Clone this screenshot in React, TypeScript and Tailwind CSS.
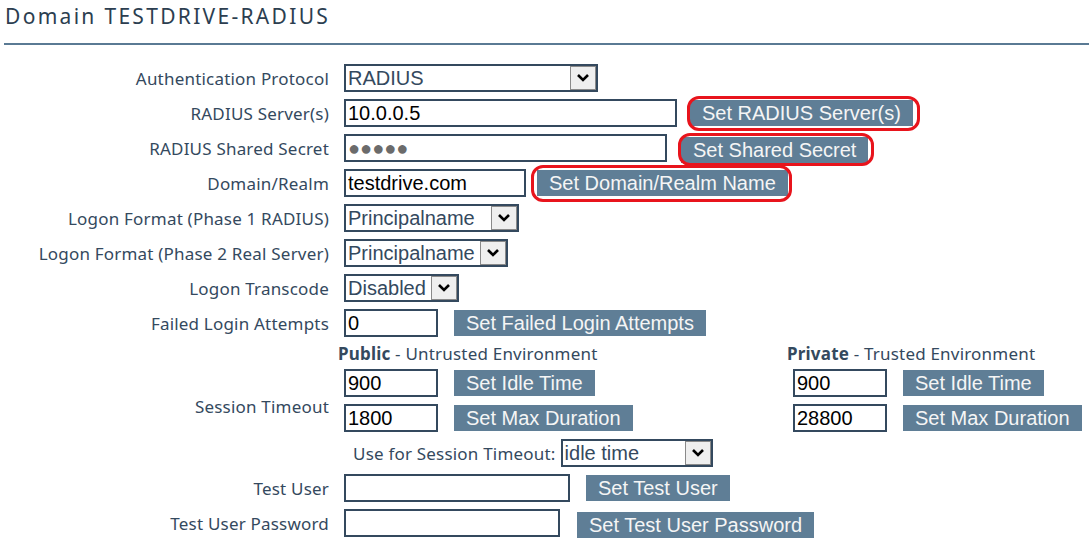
const font = "[font-family:'Noto_Sans',sans-serif] text-[17px] tracking-[0.2px]";
const label = `text-right text-[#34495e] ${font} leading-none pt-[2px]`;
const input =
  "h-[28px] border-2 border-[#34495e] bg-white pl-[2px] text-[20px] [font-family:'Liberation_Sans',Arial,sans-serif] leading-[24px] flex items-center";
const btn =
  "h-[26px] bg-[#5f7e96] px-[12px] text-[20px] text-[#f5f5f5] [font-family:'Liberation_Sans',Arial,sans-serif] leading-[26px] whitespace-nowrap";

function Chevron() {
  return (
    <svg width="14" height="10" viewBox="0 0 14 10">
      <path d="M2 2 L7 7 L12 2" fill="none" stroke="#000" strokeWidth="2.6" />
    </svg>
  );
}

function Select({ value, width }: { value: string; width: string }) {
  return (
    <div className={`h-[28px] ${width} border-2 border-[#34495e] bg-white flex items-center justify-between`}>
      <span className="pl-[2px] text-[20px] text-[#34495e] [font-family:'Liberation_Sans',Arial,sans-serif] leading-none whitespace-nowrap">
        {value}
      </span>
      <span className="h-[24px] w-[26px] bg-[#efefef] border border-[#8a8a8a] flex items-center justify-center">
        <Chevron />
      </span>
    </div>
  );
}

function Marked({ children, ring }: { children: React.ReactNode; ring: string }) {
  return (
    <div className="relative">
      {children}
      <span className={`absolute ${ring} border-[3px] border-[#e8141c] rounded-[12px] pointer-events-none`} />
    </div>
  );
}

function Row({ name, children }: { name: string; children: React.ReactNode }) {
  return (
    <>
      <div className={`${label} h-[35px] flex items-center justify-end whitespace-nowrap`}>{name}</div>
      <div className="h-[35px] flex items-center">{children}</div>
    </>
  );
}

function Timeouts({ title, sub, idle, max }: { title: string; sub: string; idle: string; max: string }) {
  return (
    <div className="flex flex-col">
      <div className={`h-[25px] -ml-[6px] pt-[3px] flex items-center text-[#34495e] ${font} whitespace-nowrap`}>
        <b className="font-bold">{title}</b>
        <span>&nbsp;- {sub}</span>
      </div>
      <div className="h-[35px] flex items-center gap-[16px]">
        <div className={`${input} text-black w-[94px]`}>{idle}</div>
        <button className={btn}>Set Idle Time</button>
      </div>
      <div className="h-[35px] flex items-center gap-[16px]">
        <div className={`${input} text-black w-[94px]`}>{max}</div>
        <button className={btn}>Set Max Duration</button>
      </div>
    </div>
  );
}

export default function App() {
  return (
    <div className="w-[1089px] h-[544px] bg-white overflow-hidden">
      <h1 className="pl-[5px] pt-[1px] h-[43px] text-[21px] tracking-[2.3px] text-[#2c3e50] [font-family:'Noto_Sans',sans-serif] leading-[30px]">
        Domain TESTDRIVE-RADIUS
      </h1>
      <div className="ml-[4px] h-[2px] bg-[#5a7a94]" />
      <div className="grid grid-cols-[329px_1fr] gap-x-[15px] mt-[15px]">
        <Row name="Authentication Protocol">
          <Select value="RADIUS" width="w-[254px]" />
        </Row>
        <Row name="RADIUS Server(s)">
          <div className={`${input} text-black w-[333px]`}>10.0.0.5</div>
          <div className="ml-[13px]">
            <Marked ring="-left-[3px] -right-[7px] -top-[4px] -bottom-[5px]">
              <button className={btn}>Set RADIUS Server(s)</button>
            </Marked>
          </div>
        </Row>
        <Row name="RADIUS Shared Secret">
          <div className={`${input} w-[323px] text-[17px] text-[#6b6b6b] tracking-[0px]`}>●●●●●</div>
          <div className="ml-[14px] mt-[4px]">
            <Marked ring="-left-[3px] -right-[6px] -top-[4px] -bottom-[3px]">
              <button className={btn}>Set Shared Secret</button>
            </Marked>
          </div>
        </Row>
        <Row name="Domain/Realm">
          <div className={`${input} text-black w-[182px]`}>testdrive.com</div>
          <div className="ml-[11px]">
            <Marked ring="-left-[6px] -right-[4px] -top-[5px] -bottom-[6px]">
              <button className={btn}>Set Domain/Realm Name</button>
            </Marked>
          </div>
        </Row>
        <Row name="Logon Format (Phase 1 RADIUS)">
          <Select value="Principalname" width="w-[175px]" />
        </Row>
        <Row name="Logon Format (Phase 2 Real Server)">
          <Select value="Principalname" width="w-[164px]" />
        </Row>
        <Row name="Logon Transcode">
          <Select value="Disabled" width="w-[115px]" />
        </Row>
        <Row name="Failed Login Attempts">
          <div className={`${input} text-black w-[94px]`}>0</div>
          <button className={`${btn} ml-[16px]`}>Set Failed Login Attempts</button>
        </Row>
        <div className={`${label} flex items-center justify-end`}>Session Timeout</div>
        <div className="flex flex-col">
          <div className="flex">
            <div className="w-[449px]">
              <Timeouts title="Public" sub="Untrusted Environment" idle="900" max="1800" />
            </div>
            <Timeouts title="Private" sub="Trusted Environment" idle="900" max="28800" />
          </div>
          <div className="h-[35px] flex items-center pl-[9px] gap-[5px]">
            <span className={`text-[#34495e] ${font} pt-[2px] whitespace-nowrap`}>Use for Session Timeout:</span>
            <Select value="idle time" width="w-[152px]" />
          </div>
        </div>
        <Row name="Test User">
          <div className={`${input} w-[226px]`} />
          <button className={`${btn} ml-[16px]`}>Set Test User</button>
        </Row>
        <Row name="Test User Password">
          <div className={`${input} w-[216px]`} />
          <button className={`${btn} ml-[17px] mt-[4px]`}>Set Test User Password</button>
        </Row>
      </div>
    </div>
  );
}
